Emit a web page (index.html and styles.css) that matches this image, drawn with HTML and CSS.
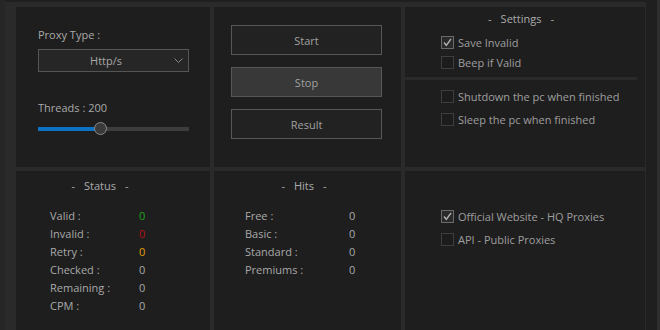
FILE: index.html
```html
<!DOCTYPE html>
<html>
<head>
<meta charset="utf-8">
<link rel="stylesheet" href="styles.css">
</head>
<body>
<div class="edge"></div>
<div class="main">
  <div class="grid">
    <section class="panel proxy">
      <div class="label">Proxy Type :</div>
      <div class="select">
        <span class="select-text">Http/s</span>
        <svg class="chev" width="9" height="5" viewBox="0 0 9 5"><path d="M0.5 0.5 L4.5 4.5 L8.5 0.5" fill="none" stroke="#8a8a8a" stroke-width="1"/></svg>
      </div>
      <div class="label threads">Threads : 200</div>
      <div class="slider">
        <div class="track"><div class="fill" style="width:62px"></div></div>
        <div class="thumb"></div>
      </div>
    </section>
    <section class="panel buttons">
      <button class="btn">Start</button>
      <button class="btn active">Stop</button>
      <button class="btn">Result</button>
    </section>
    <section class="panel settings">
      <div class="title"><span>-</span><span>Settings</span><span>-</span></div>
      <div class="checks top">
        <label class="cb"><span class="box checked"><svg width="11" height="11" viewBox="0 0 11 11"><path d="M2 5.5 L4.3 8.3 L9 2" fill="none" stroke="#b0b0b0" stroke-width="1.4"/></svg></span>Save Invalid</label>
        <label class="cb"><span class="box"></span>Beep if Valid</label>
      </div>
      <div class="divider"></div>
      <div class="checks bottom">
        <label class="cb"><span class="box"></span>Shutdown the pc when finished</label>
        <label class="cb"><span class="box"></span>Sleep the pc when finished</label>
      </div>
    </section>
    <section class="panel status">
      <div class="title"><span>-</span><span>Status</span><span>-</span></div>
      <div class="stats">
        <div class="row"><span class="k">Valid :</span><span class="v green">0</span></div>
        <div class="row"><span class="k">Invalid :</span><span class="v red">0</span></div>
        <div class="row"><span class="k">Retry :</span><span class="v orange">0</span></div>
        <div class="row"><span class="k">Checked :</span><span class="v">0</span></div>
        <div class="row"><span class="k">Remaining :</span><span class="v">0</span></div>
        <div class="row"><span class="k">CPM :</span><span class="v">0</span></div>
      </div>
    </section>
    <section class="panel hits">
      <div class="title"><span>-</span><span>Hits</span><span>-</span></div>
      <div class="stats">
        <div class="row"><span class="k">Free :</span><span class="v">0</span></div>
        <div class="row"><span class="k">Basic :</span><span class="v">0</span></div>
        <div class="row"><span class="k">Standard :</span><span class="v">0</span></div>
        <div class="row"><span class="k">Premiums :</span><span class="v">0</span></div>
      </div>
    </section>
    <section class="panel source">
      <div class="checks bottom">
        <label class="cb"><span class="box checked"><svg width="11" height="11" viewBox="0 0 11 11"><path d="M2 5.5 L4.3 8.3 L9 2" fill="none" stroke="#b0b0b0" stroke-width="1.4"/></svg></span>Official Website - HQ Proxies</label>
        <label class="cb"><span class="box"></span>API - Public Proxies</label>
      </div>
    </section>
  </div>
</div>
<div class="gutter"></div>
<div class="rim"></div>
</body>
</html>
```
FILE: styles.css
```css
html, body {
  margin: 0;
  padding: 0;
}
body {
  width: 660px;
  height: 330px;
  overflow: hidden;
  display: flex;
  background: #1f1f1f;
  font-family: "Open Sans", "Noto Sans", sans-serif;
  font-size: 11px;
  color: #a9a9a9;
}
.edge {
  width: 5px;
  background: #262626;
  flex: none;
}
.main {
  width: 641px;
  flex: none;
  background: #2a2a2a;
  border-top: 2px solid #1f1f1f;
  padding: 5px 1px 0 11px;
  box-sizing: border-box;
}
.gutter {
  width: 11px;
  flex: none;
}
.rim {
  width: 3px;
  flex: none;
  background: #2e2e2e;
}
.grid {
  display: grid;
  grid-template-columns: 194px 187px 240px;
  grid-template-rows: 160px 170px;
  gap: 4px;
}
.panel {
  background: #1e1e1e;
  box-sizing: border-box;
}
.label {
  line-height: 16px;
  height: 16px;
}
.proxy {
  padding: 20px 21px 0 22px;
  display: flex;
  flex-direction: column;
}
.select {
  margin-top: 6px;
  height: 23px;
  border: 1px solid #555;
  background: #262626;
  box-sizing: border-box;
  display: flex;
  align-items: center;
}
.select-text {
  width: 134px;
  text-align: center;
  color: #a8a8a8;
}
.chev {
  margin-left: 1px;
}
.threads {
  margin-top: 28px;
}
.slider {
  margin-top: 6px;
  height: 14px;
  position: relative;
  display: flex;
  align-items: center;
}
.track {
  width: 100%;
  height: 4px;
  background: #3d3d3d;
}
.fill {
  height: 4px;
  background: #0b72c4;
}
.thumb {
  position: absolute;
  left: 56px;
  top: 0;
  width: 13px;
  height: 13px;
  border-radius: 50%;
  background: #3a3a3a;
  border: 1px solid #8c8c8c;
  box-sizing: border-box;
}
.buttons {
  padding: 18px 0 0 17px;
  display: flex;
  flex-direction: column;
  gap: 12px;
}
.btn {
  width: 151px;
  height: 30px;
  background: #222;
  border: 1px solid #575757;
  color: #a0a0a0;
  font-family: inherit;
  font-size: 11px;
  padding: 0;
}
.btn.active {
  background: #383838;
}
.settings {
  padding: 4px 8px 0 0;
}
.title {
  display: flex;
  justify-content: center;
  gap: 9px;
  line-height: 16px;
  color: #ababab;
}
.checks {
  padding-left: 36px;
  display: flex;
  flex-direction: column;
}
.checks.top {
  margin-top: 9px;
  gap: 7px;
}
.checks.bottom {
  gap: 10px;
}
.cb {
  display: flex;
  align-items: center;
  gap: 4px;
  height: 13px;
  line-height: 13px;
  color: #9e9e9e;
}
.box {
  width: 13px;
  height: 13px;
  box-sizing: border-box;
  border: 1px solid #3e3e3e;
  background: #1c1c1c;
  display: flex;
  align-items: center;
  justify-content: center;
  flex: none;
}
.box.checked {
  border-color: #6a6a6a;
  background: #2a2a2a;
}
.divider {
  height: 3px;
  background: #2a2a2a;
  margin: 8px 0 10px 0;
}
.status {
  padding: 7px 0 0 34px;
}
.status .title {
  width: 100px;
}
.stats {
  margin-top: 13px;
  display: flex;
  flex-direction: column;
}
.row {
  display: flex;
  line-height: 18px;
  height: 18px;
}
.status .k {
  width: 89px;
}
.hits {
  padding: 7px 0 0 31px;
}
.hits .title {
  width: 118px;
}
.hits .k {
  width: 104px;
}
.green { color: #1fa21f; }
.red { color: #b31212; }
.orange { color: #e3a10c; }
.source {
  padding-top: 39px;
}
```
